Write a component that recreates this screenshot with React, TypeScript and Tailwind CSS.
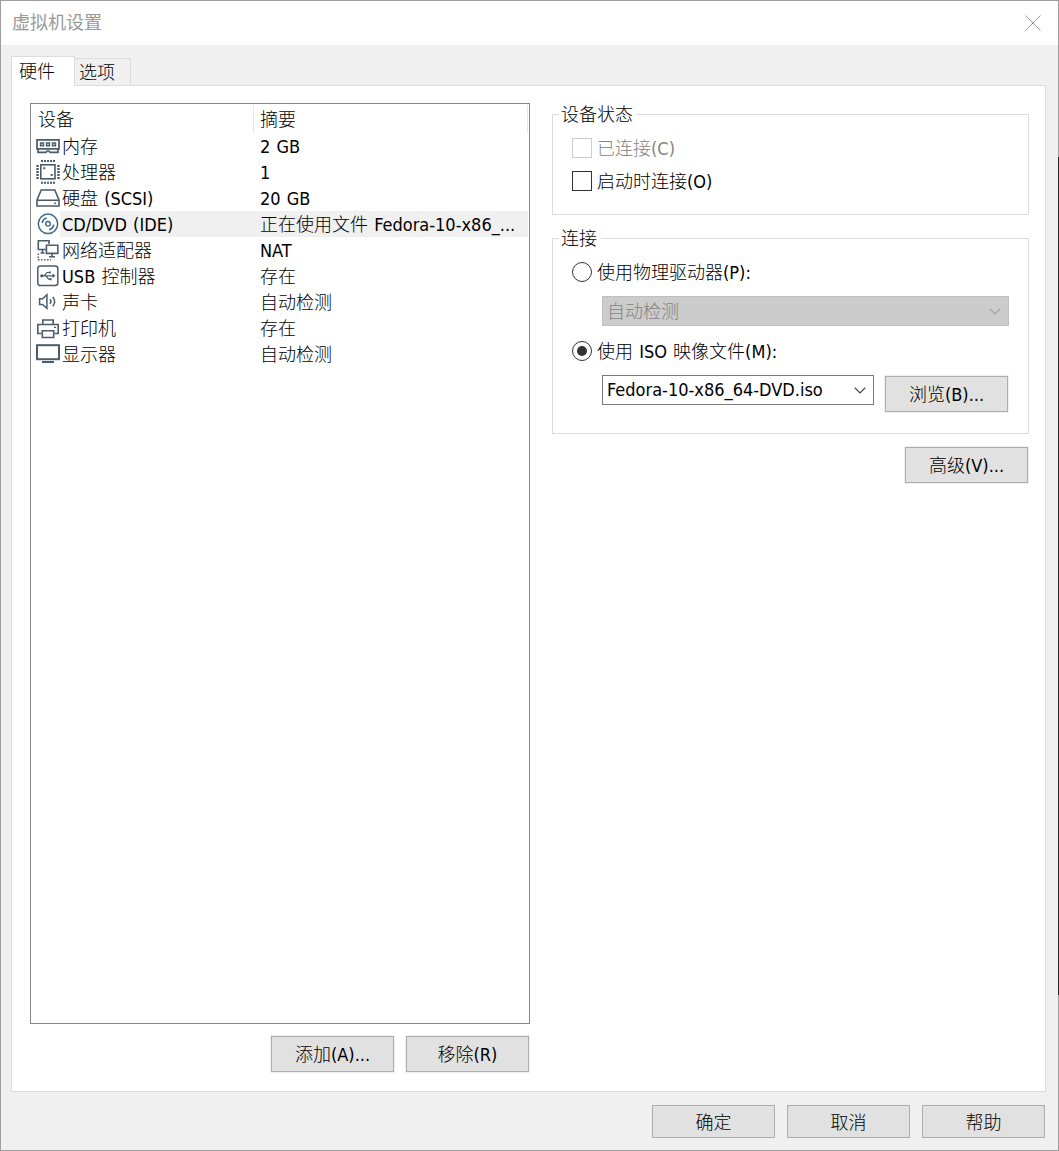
import React from 'react';

const devices = [
    { name: '内存', summary: '2 GB', icon: 'memory' },
    { name: '处理器', summary: '1', icon: 'cpu' },
    { name: '硬盘 (SCSI)', summary: '20 GB', icon: 'disk' },
    { name: 'CD/DVD (IDE)', summary: '正在使用文件 Fedora-10-x86_...', icon: 'cd', selected: true },
    { name: '网络适配器', summary: 'NAT', icon: 'network' },
    { name: 'USB 控制器', summary: '存在', icon: 'usb' },
    { name: '声卡', summary: '自动检测', icon: 'sound' },
    { name: '打印机', summary: '存在', icon: 'printer' },
    { name: '显示器', summary: '自动检测', icon: 'display' },
];

// Each drawing lives on a 24x26 grid, the size of a list row
const icons: Record<string, React.ReactNode> = {
    memory: (
        <>
            <path d="M1 6.8h22v9H1zM2 15.8v3.6h8l1-1.4h2l1 1.4h8v-3.6" strokeWidth="1.7" />
            <path d="M4.6 10h2.8v2.8H4.6zM10.6 10h2.8v2.8h-2.8zM16.6 10h2.8v2.8h-2.8z" strokeWidth="1.6" />
        </>
    ),
    cpu: (
        <>
            <rect x="4.8" y="5.8" width="14.2" height="14" strokeWidth="1.6" />
            <path d="M5 2h14M5 23.7h14" strokeWidth="2" strokeDasharray="2 1" />
            <path d="M1.5 6v14M22.5 6v14" strokeWidth="2.4" strokeDasharray="2 1" />
            <path d="M7.3 9.3h2M14.7 16h2" strokeWidth="2" />
        </>
    ),
    disk: (
        <>
            <path d="M5.2 5h13.6L23 15v6H1v-6zM1 15.3h22" strokeWidth="1.6" />
            <path d="M18.3 18.3h1.8" strokeWidth="1.6" />
        </>
    ),
    cd: (
        <>
            <circle cx="12" cy="12.8" r="9.7" strokeWidth="1.5" />
            <circle cx="12" cy="12.8" r="2.3" strokeWidth="1.4" />
            <path d="M6.3 12a6 6 0 0 1 4.5-5M17.7 13.6a6 6 0 0 1-4.5 5" strokeWidth="1.6" />
        </>
    ),
    network: (
        <>
            <path d="M13 7V3.7H2.3v8.8h7.5M6.5 13v3M4.5 16h4" strokeWidth="1.6" />
            <path d="M10.4 8.2h11.4v8.2H10.4zM16 16.5v3M13 19.8h6" strokeWidth="1.6" />
            <path d="M2.3 16.5v6.2H15" strokeWidth="1.5" strokeDasharray="1.5 1.5" />
        </>
    ),
    usb: (
        <>
            <rect x="1.8" y="3" width="20" height="19.6" rx="2.5" strokeWidth="1.5" />
            <path d="M5.5 12.8h12M8 12.8l3-3.3h3M10 12.8l2.5 3.3H15" strokeWidth="1.2" />
            <path d="M16.5 10.6l3 2.2-3 2.2z" fill="currentColor" stroke="none" />
            <circle cx="5.8" cy="12.8" r="1.6" fill="currentColor" stroke="none" />
            <path d="M12.8 8.6h2v2h-2zM13.6 15.2h2v2h-2z" fill="currentColor" stroke="none" />
        </>
    ),
    sound: (
        <>
            <path d="M3.6 9.8v5.6h2.9l4.4 4V5.8l-4.4 4z" strokeWidth="1.5" />
            <path d="M14 10.3q1.8 2.3 0 4.6M16.8 8q3.6 4.6 0 9.2" strokeWidth="1.5" />
        </>
    ),
    printer: (
        <>
            <path d="M6.8 9.5V5h10.4v4.5M5.5 18.5H1.8v-9h20.4v9h-3.7" strokeWidth="1.6" />
            <path d="M6.3 15.7h11.4v6.8H6.3z" strokeWidth="1.6" />
            <path d="M18 12.4h2" strokeWidth="1.4" />
        </>
    ),
    display: (
        <>
            <rect x="1" y="4.2" width="22" height="14" strokeWidth="2" />
            <path d="M6 21h12" strokeWidth="2" />
        </>
    ),
};

function DeviceIcon({ name }: { name: string }) {
    return (
        <svg viewBox="0 0 24 26" className={`w-6 h-[26px] shrink-0 ${name === 'cd' ? 'text-[#3f6a8c]' : 'text-[#4b5c6b]'}`} fill="none" stroke="currentColor">
            {icons[name]}
        </svg>
    );
}

// Latin runs use a condensed face next to the Chinese text
function Label({ text, className = '' }: { text: string; className?: string }) {
    return (
        <span className={`whitespace-pre ${className}`}>
            {text.split(/([\x20-\x7e]+)/).filter(Boolean).map((part, i) =>
                /[\x20-\x7e]/.test(part) ? (
                    <span key={i} className="font-['DejaVu_Sans_Condensed','DejaVu_Sans',sans-serif] font-stretch-condensed [word-spacing:1px] leading-none font-normal">{part}</span>
                ) : (
                    <span key={i}>{part}</span>
                )
            )}
        </span>
    );
}

function Button({ text, className = 'h-9' }: { text: string; className?: string }) {
    return (
        <button className={`w-[123px] shrink-0 flex items-center justify-center pb-[2px] border border-[#adadad] bg-[#e1e1e1] ring-1 ring-[#f0f0f0] ${className}`}>
            <Label text={text} />
        </button>
    );
}

function Chevron({ className }: { className: string }) {
    return (
        <svg viewBox="0 0 12 7" className={`w-3 h-[7px] ${className}`} fill="none" stroke="currentColor" strokeWidth="1.2">
            <path d="M0.7 0.7L6 6l5.3-5.3" />
        </svg>
    );
}

function Group({ title, className, children }: { title: string; className: string; children: React.ReactNode }) {
    return (
        <fieldset className={`w-[477px] border border-[#dcdcdc] min-w-0 ${className}`}>
            <legend className="ml-1.5 pl-[2px] pr-1 h-[24px] leading-[22px]">{title}</legend>
            {children}
        </fieldset>
    );
}

export default function App() {
    return (
        <div className="relative w-[1059px] h-[1151px] flex flex-col border border-[#9e9e9e] bg-[#f0f0f0] text-black text-[18px] leading-[26px] font-light font-['Noto_Sans_CJK_SC',sans-serif]">
            <div className="h-11 shrink-0 flex items-center justify-between bg-white pl-[11px] pr-[17px] text-[#999999]">
                <span className="font-normal -mt-[4px]">虚拟机设置</span>
                <svg viewBox="0 0 16 16" className="w-4 h-4 -mt-px" fill="none" stroke="currentColor" strokeWidth="1">
                    <path d="M0.5 0.5l15 15M15.5 0.5l-15 15" />
                </svg>
            </div>

            <div className="h-10 shrink-0 flex items-end pl-[10px] pt-[11px]">
                <div className="relative z-10 w-[64px] h-[30px] -mb-px border border-b-0 border-[#dcdcdc] bg-white pl-[7px] leading-[26px]">硬件</div>
                <div className="w-[56px] h-[27px] border border-l-0 border-b-0 border-[#dcdcdc] pl-1 leading-[25px]">选项</div>
            </div>

            <div className="ml-[10px] w-[1035px] h-[1007px] shrink-0 flex border border-[#dcdcdc] bg-white pl-[18px] pt-[17px]">
                <div className="w-[500px] mr-[22px]">
                    <div className="h-[921px] border border-[#828790] px-px">
                        <div className="flex h-[29px] pt-px">
                            <div className="w-[222px] border-r border-[#e5e5e5] pl-[6px]">设备</div>
                            <div className="w-[274px] border-r border-[#e5e5e5] pl-[6px]">摘要</div>
                        </div>
                        {devices.map((device) => (
                            <div key={device.name} className="flex h-[26px] pl-[4px] leading-[24px]">
                                <DeviceIcon name={device.icon} />
                                <div className={`flex flex-1 pl-[2px] ${device.selected ? 'bg-[#f0f0f0]' : ''}`}>
                                    <div className="w-[198px]"><Label text={device.name} /></div>
                                    <div><Label text={device.summary} /></div>
                                </div>
                            </div>
                        ))}
                    </div>
                    <div className="flex justify-end gap-3 mt-3 pr-px">
                        <Button text="添加(A)..." />
                        <Button text="移除(R)" />
                    </div>
                </div>

                <div className="w-[477px]">
                    <Group title="设备状态" className="h-[113px] -mt-px">
                        <div className="flex items-center h-[33px] pl-[19px] mt-[5px] text-[#838383]">
                            <span className="w-5 h-5 mr-[5px] border border-[#cccccc] bg-white" />
                            <Label text="已连接(C)" className="pb-[2px]" />
                        </div>
                        <div className="flex items-center h-[33px] pl-[19px]">
                            <span className="w-5 h-5 mr-[5px] border border-[#333333] bg-white" />
                            <Label text="启动时连接(O)" className="pb-[2px]" />
                        </div>
                    </Group>
                    <Group title="连接" className="h-[208px] mt-[11px]">
                        <div className="flex items-center h-[30px] pl-[19px] mt-[7px]">
                            <span className="w-5 h-5 mr-[5px] rounded-full border border-[#333333]" />
                            <Label text="使用物理驱动器(P):" className="pb-[2px]" />
                        </div>
                        <div className="flex items-center justify-between w-[407px] h-[30px] ml-[49px] mt-[9px] pl-1 pr-[7px] border border-[#bfbfbf] bg-[#cccccc] text-[#838383]">
                            <Label text="自动检测" className="pb-[2px]" />
                            <Chevron className="text-[#a0a0a0]" />
                        </div>
                        <div className="flex items-center h-[30px] pl-[19px] mt-[10px]">
                            <span className="w-5 h-5 mr-[5px] rounded-full border border-[#333333] flex items-center justify-center">
                                <span className="w-[10px] h-[10px] rounded-full bg-[#333333]" />
                            </span>
                            <Label text="使用 ISO 映像文件(M):" className="pb-[2px]" />
                        </div>
                        <div className="flex ml-[49px] mt-[9px]">
                            <div className="flex items-center justify-between w-[272px] h-[30px] pl-1 pr-[7px] mr-[11px] border border-[#7a7a7a]">
                                <Label text="Fedora-10-x86_64-DVD.iso" className="pb-[4px]" />
                                <Chevron className="text-[#404040]" />
                            </div>
                            <Button text="浏览(B)..." className="h-9 mt-px" />
                        </div>
                    </Group>
                    <div className="flex justify-end mt-[13px] pr-px">
                        <Button text="高级(V)..." />
                    </div>
                </div>
            </div>

            <div className="flex justify-end gap-3 pt-[13px] pr-[13px]">
                <Button text="确定" className="h-[33px]" />
                <Button text="取消" className="h-[33px]" />
                <Button text="帮助" className="h-[33px]" />
            </div>

            {/* darker stretch of the right window edge */}
            <div className="absolute -right-px top-[156px] w-px h-[838px] bg-[#222222]" />
        </div>
    );
}
